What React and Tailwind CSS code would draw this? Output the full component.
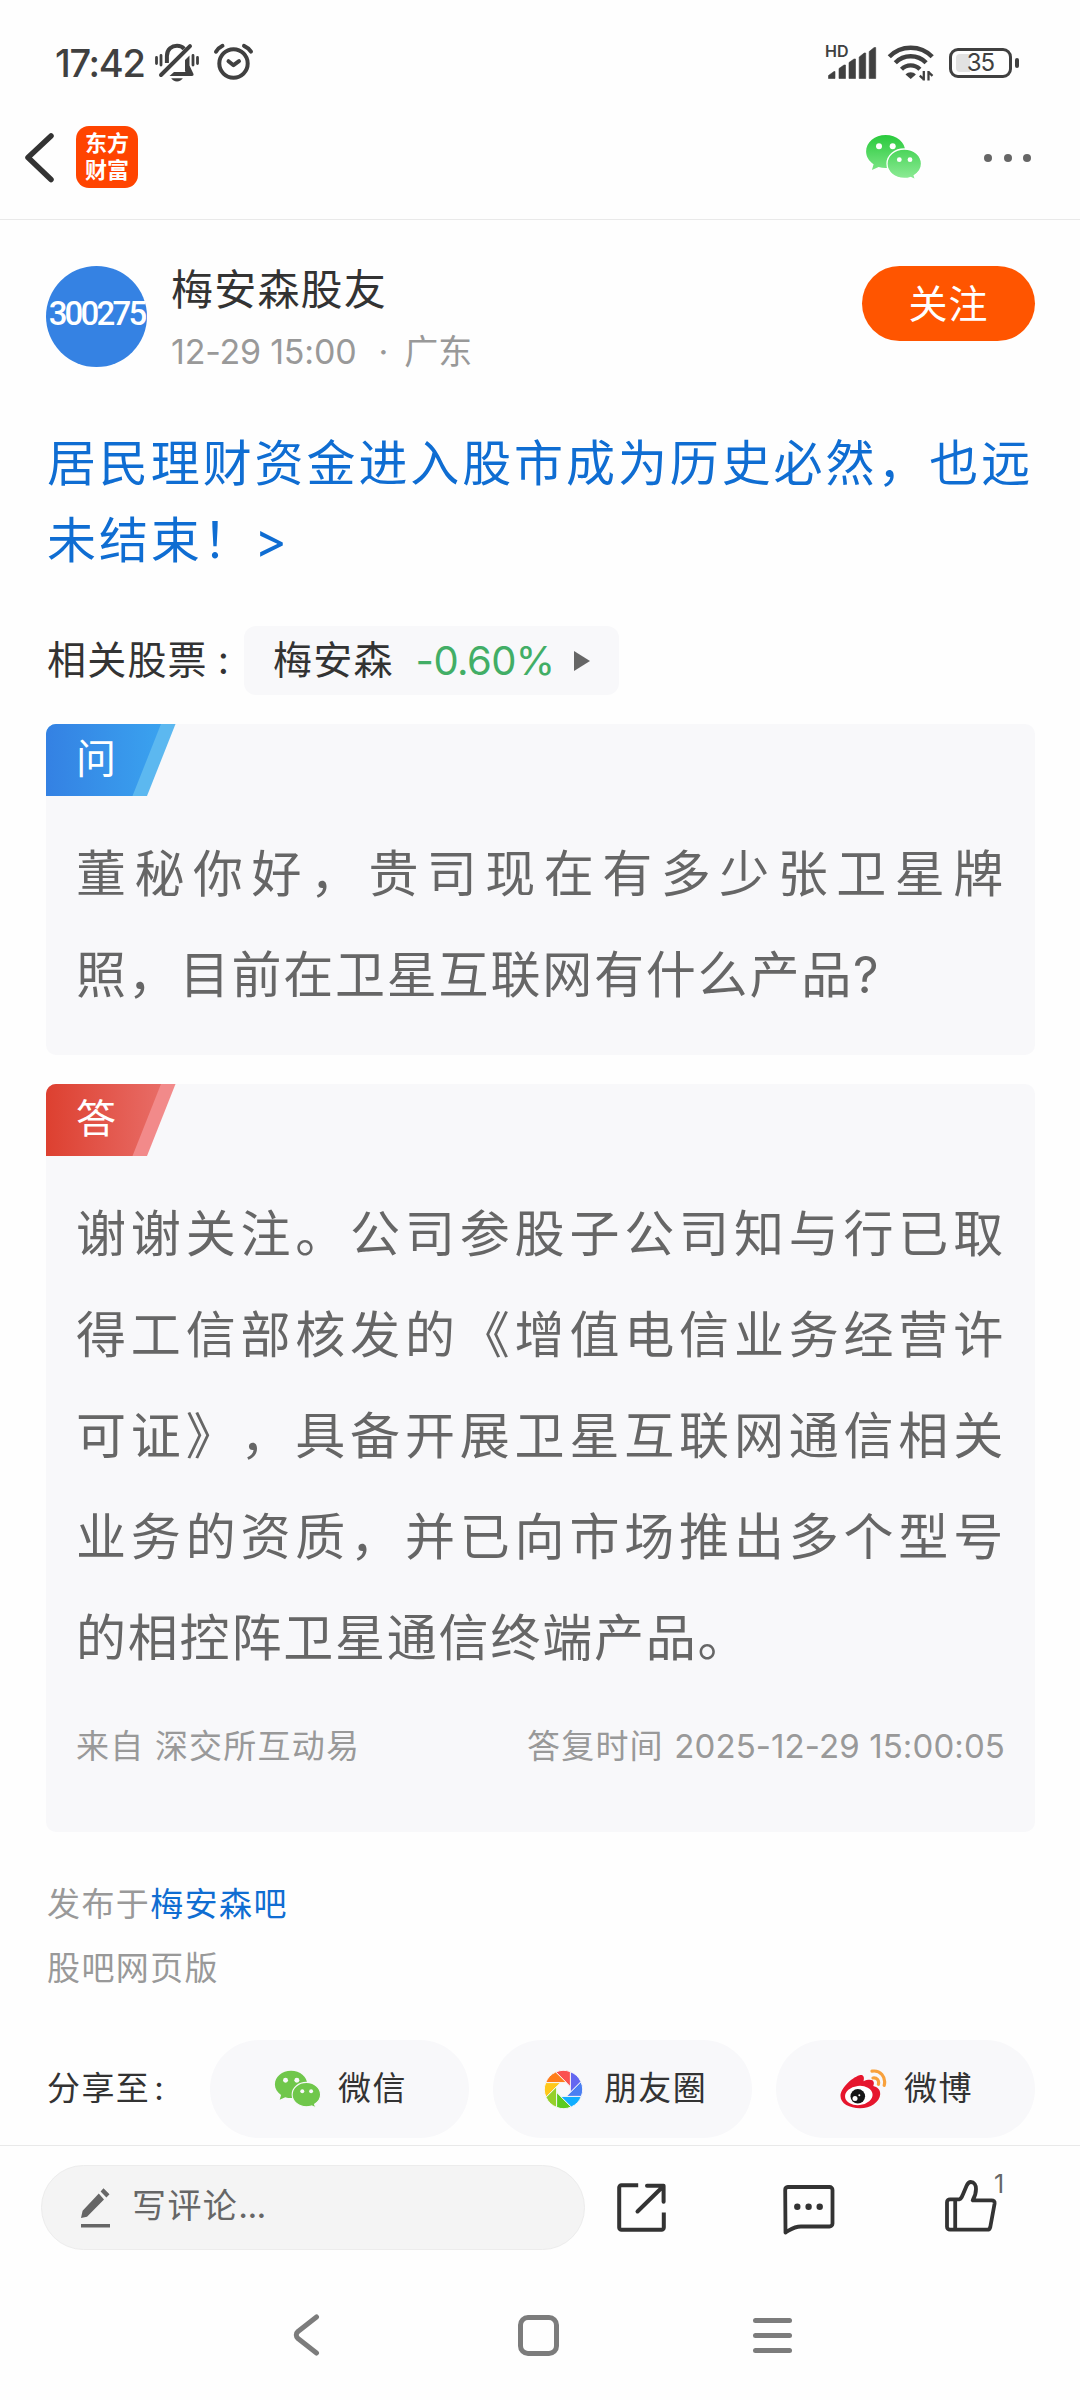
import React from 'react';
import clsx from 'clsx';

// Status bar icons
const MutedBellIcon = () => (
  <svg className="w-11 h-10" viewBox="0 0 44 40" fill="none" stroke="#404040" strokeWidth="4" strokeLinecap="round" strokeLinejoin="round">
    <path d="M11.9 20V13C11.9 6 17 2.8 22 2.8c3 0 5.6 1.200 7.200 3" strokeLinecap="butt" />
    <path d="M35 3.200 6 32" />
    <path d="M30 17l4.500-4.500V22.500l4 8.500c.3 1.200-.4 2-1.500 2H14.500l4.500-4h11.500l-.5-1z" fill="#404040" stroke="none" />
    <path d="M16.200 35.200h11.600c-1.200 2-3.200 3.200-5.800 3.200s-4.600-1.200-5.800-3.200z" fill="#404040" stroke="none" />
    <path d="M1.500 14.500v6M6 12.500v9.500M38 12.500v9.500M42.500 14.500v6" strokeWidth="2.800" />
  </svg>
);

const AlarmIcon = () => (
  <svg className="w-[41px] h-10" viewBox="0 0 41 40" fill="none" stroke="#404040" strokeWidth="4" strokeLinecap="round" strokeLinejoin="round">
    <circle cx="20.500" cy="20.500" r="14.200" />
    <path d="M15.500 18.200l5 4 5.500-4" />
    <path d="M3 8.700c1.600-2.600 3.900-4.600 6.500-5.900M31 2.800c3 1.300 5.300 3.300 7 5.900" />
  </svg>
);

const SignalIcon = () => (
  <svg className="w-[50px] h-8" viewBox="0 0 50 32" fill="#404040">
    <path d="M1.500 28.500L7 24.500h1V31.500H1.500zM12 21.500l5-3.500h1.500v13.500H12zM22 15.500l5-3.500h1.500v19.500H22zM32.200 10l5-4h1.500v25.500h-6.500zM42.200 4.500l5-4h1.500v31h-6.500z" stroke="#404040" strokeWidth=".6" strokeLinejoin="round" />
  </svg>
);

const WifiIcon = () => (
  <svg className="w-12 h-[38px]" viewBox="0 0 48 38" fill="none" stroke="#404040" strokeWidth="4.400">
    <path d="M2.300 12.800C8 6.800 15.500 3.700 23.700 3.700s15.800 3.100 21.500 9.100" />
    <path d="M8.300 18.800c4.200-4.300 9.500-6.500 15.400-6.500s11.200 2.200 15.400 6.500" />
    <path d="M14.500 25.300c2.600-2.600 5.700-3.900 9.200-3.900s6.600 1.300 9.200 3.900" />
    <path d="M18.500 30.500c1.500-1.500 3.200-2.200 5.200-2.200s3.700.7 5.200 2.200l-5.200 4.500z" fill="#404040" stroke="none" />
    <path d="M36.800 27v9.500M36.800 35.500l-4-3.800M41.500 36.500V27M41.500 28l4 3.800" strokeWidth="2.300" />
  </svg>
);

const WechatIcon = ({ className, gradient = false, gap = '#fff' }) => (
  <svg className={className} viewBox="0 0 57 46">
    <defs>
      <linearGradient id="wechatGreen" x1="0" y1="0" x2="0" y2="46" gradientUnits="userSpaceOnUse">
        <stop offset="0" stopColor="#27c93a" />
        <stop offset="1" stopColor="#90ec98" />
      </linearGradient>
    </defs>
    <g fill={gradient ? 'url(#wechatGreen)' : '#70c74b'}>
      <path d="M20.700 1C9.800 1 1.100 8.400 1.100 17.500c0 5 2.800 9.600 7.500 12.700L6.900 36l6.700-3.100c2.200.7 4.600 1.100 7.100 1.100 10.800 0 19.600-7.400 19.600-16.500S31.500 1 20.700 1z" />
      <path
        d="M39.300 15c-9.600 0-17.300 6.600-17.300 14.800s7.700 14.700 17.300 14.700c2.200 0 4.400-.4 6.300-1l5 2.300-1.400-4.300c4.400-2.700 7.300-6.900 7.300-11.700C56.500 21.600 48.900 15 39.300 15z"
        stroke={gap}
        strokeWidth="1.300"
      />
    </g>
    <g fill={gap}>
      <circle cx="14" cy="12.300" r="3" />
      <circle cx="27.700" cy="12.300" r="3" />
      <circle cx="34.300" cy="25.700" r="2.400" />
      <circle cx="45" cy="25.700" r="2.400" />
    </g>
  </svg>
);

// Colour aperture: eight blades, counter-clockwise from the upper right
const BLADES = ['#6467f0', '#fa5151', '#ff7d1a', '#ffc819', '#95d02a', '#5ccb20', '#10aeff', '#4a7ff2'];

const turn = ([x, y], k) => {
  const a = (-Math.PI / 4) * k;
  return [x * Math.cos(a) - y * Math.sin(a), x * Math.sin(a) + y * Math.cos(a)];
};

const MomentsIcon = () => (
  <svg className="w-[39px] h-[39px]" viewBox="-1.020 -1.020 2.040 2.040">
    {BLADES.map((color, k) => {
      const v = turn([0.36, 0.15], k);
      const from = turn([0.36, -0.933], k - 1);
      const to = turn([0.36, -0.933], k);
      return (
        <path
          key={color}
          d={`M${v} L${from} A1 1 0 0 0 ${to} Z`}
          fill={color}
          stroke="#f8f8fa"
          strokeWidth=".05"
        />
      );
    })}
  </svg>
);

const WeiboIcon = () => (
  <svg className="w-[47px] h-10" viewBox="0 0 47 40">
    <path
      d="M19.500 6.200c3.500-1.200 5.300 1.200 4 6 4.500-1.800 9.700-2.200 10.300 1.300.2 1.200-.2 2.400-.6 3.500 4 .8 7.300 3.600 7 8.200C39.700 33 30.600 39.200 20 39.200S.5 34.500.5 27C.5 19.500 11 9 19.500 6.200z"
      fill="#e6162d"
    />
    <ellipse cx="18.800" cy="26.500" rx="13.800" ry="9.600" fill="#fff" transform="rotate(-6 18.800 26.500)" />
    <circle cx="17.800" cy="27.300" r="7.300" fill="#161616" />
    <circle cx="15" cy="29.500" r="2.500" fill="#fff" />
    <circle cx="19.300" cy="26.300" r="1" fill="#fff" />
    <path d="M32 2.200c8-1.400 14.400 5.600 12.200 14.200M33 9c4-.6 6.400 2.800 5.400 6.300" fill="none" stroke="#f8a13c" strokeWidth="3.200" strokeLinecap="round" />
  </svg>
);

const PencilIcon = () => (
  <svg className="w-[29px] h-10" viewBox="0 0 29 40" fill="#666">
    <path d="M0 30l1.600-7.200L17.800 5.500l5.200 6L6 28.800zM19.600 3.600L22.500.3l6 5.900-3.100 3.200zM0 36h29v3.600H0z" />
  </svg>
);

const ShareIcon = () => (
  <svg className="w-[50px] h-[50px]" viewBox="0 0 50 50" fill="none" stroke="#333" strokeWidth="4" strokeLinejoin="round">
    <path d="M21.200 2.200H4.500a2.300 2.300 0 0 0-2.300 2.300v40a2.300 2.300 0 0 0 2.300 2.300h40a2.300 2.300 0 0 0 2.300-2.300V29.500" />
    <path d="M30 2.800h16.600v16M46 3.500L20.500 28.500" strokeLinecap="round" />
  </svg>
);

const CommentIcon = () => (
  <svg className="w-[52px] h-[50px]" viewBox="0 0 52 50" fill="none" stroke="#333" strokeWidth="3.800" strokeLinejoin="round">
    <path d="M5 2h41.500a3 3 0 0 1 3 3v33.500a3 3 0 0 1-3 3H18c-7 0-9.500 2.500-15.500 6L2.200 5A3 3 0 0 1 5 2z" />
    <g fill="#333" stroke="none">
      <circle cx="14.300" cy="21.800" r="3.200" />
      <circle cx="25.600" cy="21.800" r="3.200" />
      <circle cx="36.700" cy="21.800" r="3.200" />
    </g>
  </svg>
);

const LikeIcon = () => (
  <svg className="w-[52px] h-[52px]" viewBox="0 0 52 52" fill="none" stroke="#333" strokeWidth="3.800" strokeLinejoin="round">
    <path d="M5 19.300h9.500c1.800-.6 2.500-2.500 3.300-4.600l3.800-9C22.700 3.200 24 2 25.800 2c3.400 0 5.200 3 5.200 7 0 4-1.300 8-3.300 11.300h18.800c2.200 0 3.400 1.200 3.100 3.200l-4.300 23.500c-.4 1.800-1.300 2.700-3 2.700H5a3 3 0 0 1-3-3V22.300a3 3 0 0 1 3-3zM10.200 19.500v30" />
  </svg>
);

const StatusBar = () => (
  <div className="flex items-center justify-between h-[126px] pl-[55px] pr-[61px] text-[#404040]">
    <div className="flex items-center">
      <span className="w-[100px] text-[38px] font-medium tracking-[-1.3px] whitespace-nowrap">17:42</span>
      <MutedBellIcon />
      <span className="ml-[14px]"><AlarmIcon /></span>
    </div>
    <div className="flex items-center">
      <div className="relative mr-[10px]">
        <span className="absolute left-[-2px] top-[-4px] text-[16px] leading-[16px] font-semibold">HD</span>
        <SignalIcon />
      </div>
      <WifiIcon />
      <div className="flex items-center ml-[14px]">
        <div className="relative flex items-center justify-center w-[63px] h-[30px] rounded-[9px] border-[3px] border-[#404040]">
          <span className="absolute left-1 top-[3px] w-3.5 h-[18px] rounded-l bg-[#e2e2e2]"></span>
          <span className="relative text-[24px] leading-[24px] tracking-[-1px]">35</span>
        </div>
        <span className="ml-[3px] w-1 h-2.5 rounded-full bg-[#404040]"></span>
      </div>
    </div>
  </div>
);

const Header = () => (
  <header className="flex items-start h-[94px] border-b border-[#e9e9e9] pl-6 pr-[49px]">
    <svg className="mt-[6px] w-[31px] h-[51px]" viewBox="0 0 31 51" fill="none" stroke="#333" strokeWidth="5.500" strokeLinecap="round" strokeLinejoin="round">
      <path d="M27 4L4 25.500l23 22" />
    </svg>
    <div className="ml-[21px] flex flex-col items-center justify-center w-[62px] h-[62px] rounded-[13px] bg-[#ff4400] text-white text-[22px] leading-[27px] font-bold">
      <span>东方</span>
      <span>财富</span>
    </div>
    <WechatIcon className="ml-auto mt-2 w-[57px] h-[46px]" gradient />
    <div className="flex gap-[11.5px] ml-[62px] mt-7">
      <span className="w-2 h-2 rounded-full bg-[#666]"></span>
      <span className="w-2 h-2 rounded-full bg-[#666]"></span>
      <span className="w-2 h-2 rounded-full bg-[#666]"></span>
    </div>
  </header>
);

const Ribbon = ({ id, label, from, to, edge }) => (
  <div className="relative w-[130px] h-[72px]">
    <svg className="absolute inset-0 w-full h-full" viewBox="0 0 130 72">
      <defs>
        <linearGradient id={id}>
          <stop offset="0" stopColor={from} />
          <stop offset="1" stopColor={to} />
        </linearGradient>
      </defs>
      <path d="M0 0h129.500L101 72H0z" fill={edge} />
      <path d="M0 0h115L86.500 72H0z" fill={`url(#${id})`} />
    </svg>
    <span className="relative block pl-[30px] text-[40px] leading-[69px] text-white">{label}</span>
  </div>
);

const PostCard = ({ ribbon, className, children }) => (
  <section className={clsx('overflow-hidden rounded-[10px] bg-[#f8f8fa]', className)}>
    {ribbon}
    <div className="px-[30px] pt-7">{children}</div>
  </section>
);

const PostText = ({ children }) => (
  <p className="text-[50px] leading-[101px] tracking-[1.8px] text-justify text-[#666] [text-spacing-trim:space-all]">{children}</p>
);

const SHARE_TARGETS = [
  { label: '微信', icon: <WechatIcon className="w-[47px] h-[38px]" gap="#f8f8fa" />, gap: 'gap-[17px] pl-0.5' },
  { label: '朋友圈', icon: <MomentsIcon />, gap: 'gap-[21px] pl-1.5' },
  { label: '微博', icon: <WeiboIcon />, gap: 'gap-[17px] pl-0.5' },
];

const App = () => {
  return (
    <div className="w-[1080px] h-[2400px] overflow-hidden bg-[#fefefe] text-[#333] font-['Inter','Noto_Sans_CJK_SC',sans-serif]">
      <StatusBar />
      <Header />

      <main className="h-[1925px] pl-[46px] pr-[45px] pt-[46px]">
        <div className="flex items-start h-[101px]">
          <div className="flex items-center justify-center w-[101px] h-[101px] rounded-full bg-[#3582e3] text-white">
            <span className="pb-[5px] text-[33px] font-medium font-['Roboto',sans-serif] tracking-[-2.8px]">300275</span>
          </div>
          <div className="ml-6 pt-px">
            <div className="text-[42px] leading-[46px] tracking-[1.2px]">梅安森股友</div>
            <div className="mt-[18px] text-[34px] leading-[42px] text-[#999] flex">
              <span className="tracking-[-0.2px]">12-29 15:00</span>
              <span className="ml-[22px] mr-[16px]">·</span>
              <span>广东</span>
            </div>
          </div>
          <button type="button" className="ml-auto w-[173px] h-[75px] rounded-full bg-[#ff5500] text-white text-[39px] leading-[76px] tracking-[1px]">
            关注
          </button>
        </div>

        <h1 className="mt-[58px] w-[1000px] pl-px text-[49px] leading-[77px] tracking-[2.9px] text-[#0f6dd2] [text-spacing-trim:space-all]">
          居民理财资金进入股市成为历史必然，也远<br />
          未结束！&gt;
        </h1>

        <div className="flex items-center mt-[47px] h-[69px] text-[39px]">
          <span className="w-[198px] pl-px tracking-[1.2px] whitespace-nowrap">
            相关股票<span className="ml-2.5">:</span>
          </span>
          <div className="flex items-center h-[69px] w-[375px] pl-[29px] rounded-xl bg-[#f8f8fa]">
            <span className="tracking-[1.2px]">梅安森</span>
            <span className="ml-[22px] w-[138px] text-[40px] tracking-[-0.6px] text-[#42ae66] whitespace-nowrap">-0.60%</span>
            <svg className="ml-[20px] w-4 h-5" viewBox="0 0 16 20"><path d="M0 0l16 10L0 20z" fill="#666" /></svg>
          </div>
        </div>

        <PostCard className="mt-[29px] h-[331px]" ribbon={<Ribbon id="askBlue" label="问" from="#3481e3" to="#3aa2ef" edge="#5cb8f0" />}>
          <PostText>董秘你好，贵司现在有多少张卫星牌照，目前在卫星互联网有什么产品?</PostText>
        </PostCard>

        <PostCard className="mt-[29px] h-[748px]" ribbon={<Ribbon id="answerRed" label="答" from="#dd4030" to="#e86c66" edge="#f28a8a" />}>
          <PostText>
            谢谢关注。公司参股子公司知与行已取得工信部核发的《增值电信业务经营许可证》，具备开展卫星互联网通信相关业务的资质，并已向市场推出多个型号的相控阵卫星通信终端产品。
          </PostText>
          <div className="flex justify-between mt-8 text-[33px] leading-[50px] tracking-[1.2px] text-[#999]">
            <span>来自 深交所互动易</span>
            <span>答复时间 <span className="tracking-[0.1px]">2025-12-29 15:00:05</span></span>
          </div>
        </PostCard>

        <div className="mt-10 pl-px text-[33px] leading-[64px] tracking-[1.4px] text-[#999]">
          <div>发布于<span className="text-[#0f6dd2]">梅安森吧</span></div>
          <div>股吧网页版</div>
        </div>

        <div className="flex items-center mt-10 h-[98px] text-[33px] tracking-[1.4px]">
          <span className="w-[164px] pl-px">分享至<span className="ml-1">:</span></span>
          <div className="flex gap-[24px]">
            {SHARE_TARGETS.map((target) => (
              <button
                key={target.label}
                type="button"
                className={clsx('flex items-center justify-center w-[259px] h-[98px] rounded-full bg-[#f8f8fa]', target.gap)}
              >
                {target.icon}
                <span>{target.label}</span>
              </button>
            ))}
          </div>
        </div>
      </main>

      <footer className="relative h-[255px] border-t border-[#e9e9e9] bg-[#fefefe]">
        <div className="flex items-start pl-[41px] pt-[19px]">
          <div className="flex items-center w-[544px] h-[85px] pl-[39px] rounded-full border border-[#ececec] bg-[#f4f4f4] text-[#666]">
            <PencilIcon />
            <span className="ml-[22px] pb-1 text-[34px] tracking-[1.4px]">写评论<span className="tracking-[-0.6px]">...</span></span>
          </div>
          <span className="ml-8 mt-[18px]"><ShareIcon /></span>
          <span className="ml-[116px] mt-[20px]"><CommentIcon /></span>
          <span className="relative ml-[110px] mt-[15px]">
            <LikeIcon />
            <span className="absolute left-[49px] top-[-8px] text-[25px] leading-[25px] text-[#666]">1</span>
          </span>
        </div>
        <nav className="flex items-center pl-[293px] mt-[64px] h-[42px]">
          <svg className="w-[27px] h-[42px]" viewBox="0 0 27 42" fill="none" stroke="#7c7c7c" strokeWidth="5" strokeLinecap="round" strokeLinejoin="round">
            <path d="M23.500 3L5 17.500c-2.300 2-2.300 5 0 7L23.500 39" />
          </svg>
          <span className="ml-[198px] w-[41px] h-[41px] rounded-[10px] border-[5px] border-[#7c7c7c]"></span>
          <span className="flex flex-col gap-2.5 ml-[194px]">
            <span className="w-[39px] h-[5px] rounded-full bg-[#7c7c7c]"></span>
            <span className="w-[39px] h-[5px] rounded-full bg-[#7c7c7c]"></span>
            <span className="w-[39px] h-[5px] rounded-full bg-[#7c7c7c]"></span>
          </span>
        </nav>
      </footer>
    </div>
  );
};

export default App;
